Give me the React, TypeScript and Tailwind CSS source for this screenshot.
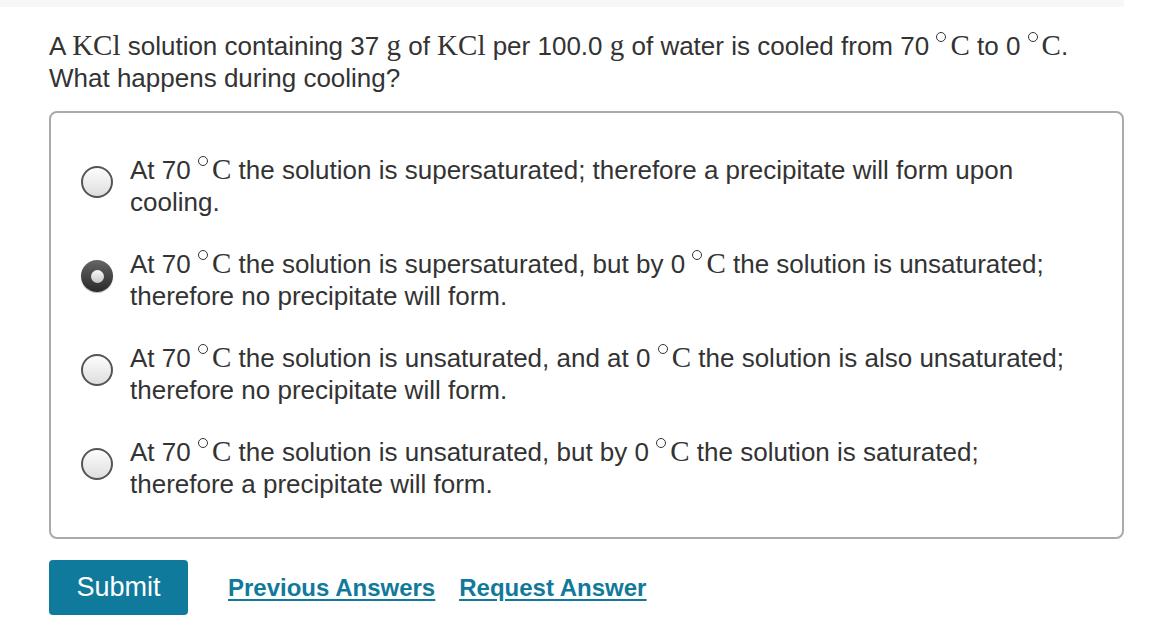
import React from "react";

const sans = "font-['Helvetica_Neue','Liberation_Sans',Arial,sans-serif]";

// math bits render in a serif face, slightly larger than body text
function M({ children }: { children: React.ReactNode }) {
  return <span className="font-['Liberation_Serif',serif] text-[29px]">{children}</span>;
}

function Deg({ t }: { t: string }) {
  return (
    <>
      {t}{" "}
      <span className="relative -top-[11px] mr-[4px] inline-block h-[10px] w-[10px] rounded-full border-[1.5px] border-[#333] align-middle" />
      <M>C</M>
    </>
  );
}

function Radio({ checked }: { checked?: boolean }) {
  if (checked) {
    return (
      <span className="mt-[13px] flex h-[32px] w-[32px] shrink-0 items-center justify-center rounded-full bg-gradient-to-b from-[#666] to-[#2a2a2a] shadow-[0_1px_1px_rgba(0,0,0,0.3)]">
        <span className="h-[13px] w-[13px] rounded-full bg-gradient-to-b from-[#fafafa] to-[#c8c8c8]" />
      </span>
    );
  }
  return (
    <span className="mt-[13px] h-[32px] w-[32px] shrink-0 rounded-full border-2 border-[#555] bg-gradient-to-b from-[#fdfdfd] to-[#dedede]" />
  );
}

const options: { checked?: boolean; body: React.ReactNode }[] = [
  {
    body: (
      <>
        At <Deg t="70" /> the solution is supersaturated; therefore a precipitate will form upon cooling.
      </>
    ),
  },
  {
    checked: true,
    body: (
      <>
        At <Deg t="70" /> the solution is supersaturated, but by <Deg t="0" /> the solution is unsaturated; therefore no
        precipitate will form.
      </>
    ),
  },
  {
    body: (
      <>
        At <Deg t="70" /> the solution is unsaturated, and at <Deg t="0" /> the solution is also unsaturated; therefore no
        precipitate will form.
      </>
    ),
  },
  {
    body: (
      <>
        At <Deg t="70" /> the solution is unsaturated, but by <Deg t="0" /> the solution is saturated; therefore a
        precipitate will form.
      </>
    ),
  },
];

export default function App() {
  return (
    <div className={`min-h-screen w-[1164px] bg-white text-[#333] ${sans}`}>
      <div className="h-[7px] w-[1124px] bg-[#f7f7f7]" />

      <div className="pl-[49px] pr-[40px] pt-[22px]">
        <p className="text-[26px] leading-[32px]">
          A <M>KCl</M> solution containing 37 <M>g</M> of <M>KCl</M> per 100.0 <M>g</M> of water is cooled from{" "}
          <Deg t="70" /> to <Deg t="0" />.
          <br />
          What happens during cooling?
        </p>

        <div className="mt-[17px] w-[1075px] rounded-[8px] border-2 border-[#aaa] pb-[37px] pl-[30px] pr-[36px] pt-[40px]">
          <div className="flex flex-col gap-[29px]">
            {options.map((o, i) => (
              <div key={i} className="flex gap-[17px]">
                <Radio checked={o.checked} />
                <p className="flex-1 text-[26px] leading-[32px]">{o.body}</p>
              </div>
            ))}
          </div>
        </div>

        <div className="mt-[21px] flex items-center gap-[40px]">
          <button className="h-[55px] w-[139px] rounded-[4px] bg-[#0f7a9c] text-[27px] text-white">Submit</button>
          <div className="flex gap-[24px] text-[24px] font-bold text-[#107a9a] underline underline-offset-[3px]">
            <a href="#">Previous Answers</a>
            <a href="#">Request Answer</a>
          </div>
        </div>
      </div>
    </div>
  );
}
